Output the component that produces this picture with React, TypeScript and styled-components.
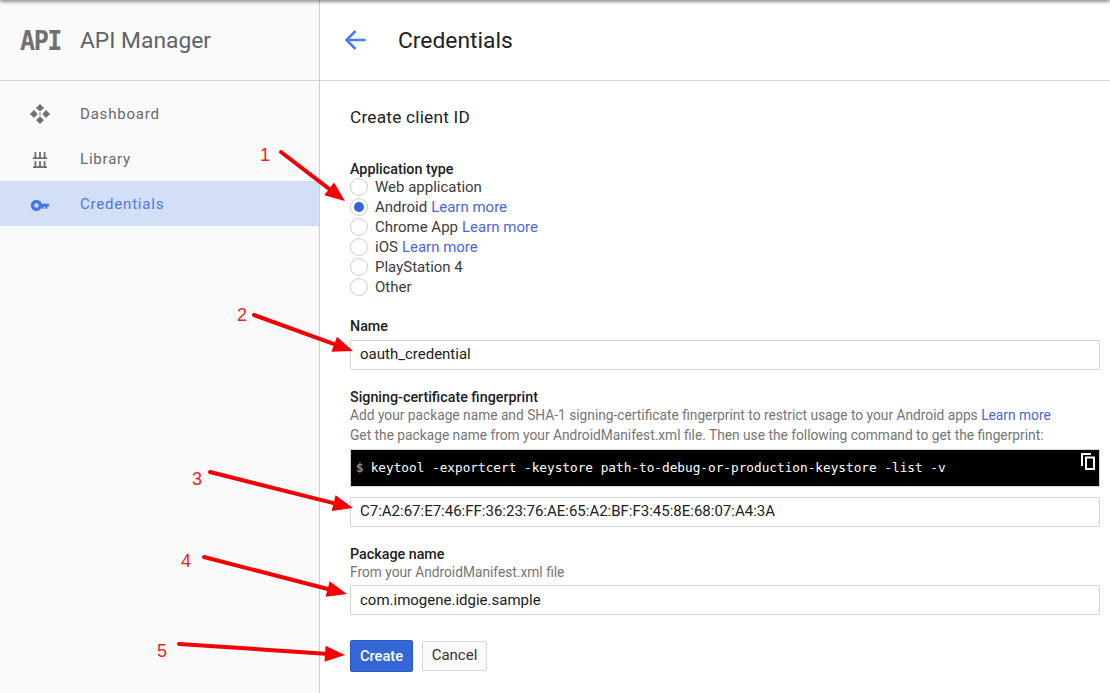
import React from 'react';
import styled, { createGlobalStyle } from 'styled-components';

const GlobalStyle = createGlobalStyle`
  html, body {
    margin: 0;
    padding: 0;
    background: #fff;
    overflow: hidden;
  }
  * { box-sizing: border-box; }
  body {
    font-family: Roboto, "Liberation Sans", Arial, sans-serif;
    color: #212121;
  }
`;

const Page = styled.div`
  position: relative;
  width: 1110px;
  height: 693px;
  display: flex;
  overflow: hidden;
`;

const TopShadow = styled.div`
  position: absolute;
  top: -4px;
  left: 0;
  right: 0;
  height: 4px;
  box-shadow: 0 1px 4px rgba(0, 0, 0, 0.65);
`;

const Sidebar = styled.aside`
  width: 320px;
  flex: none;
  background: #fafafa;
  border-right: 1px solid #cfcfcf;
`;

const Brand = styled.div`
  height: 81px;
  display: flex;
  align-items: center;
  padding-left: 20px;
  border-bottom: 1px solid #d4d4d4;
`;

const BrandMark = styled.span`
  width: 60px;
  font-family: "DejaVu Sans Mono", "Liberation Mono", monospace;
  font-weight: 700;
  font-size: 27px;
  letter-spacing: -1.6px;
  color: #707070;
  transform: scaleX(0.93);
  transform-origin: left center;
`;

const BrandName = styled.span`
  font-size: 22.8px;
  color: #5f6368;
`;

const Nav = styled.nav`
  padding-top: 10px;
`;

const NavItem = styled.div<{ $active?: boolean }>`
  height: 45px;
  display: flex;
  align-items: center;
  padding-left: 30px;
  gap: 30px;
  font-size: 15px;
  letter-spacing: 0.8px;
  color: ${({ $active }) => ($active ? '#4a78e6' : '#66696e')};
  background: ${({ $active }) => ($active ? '#d2dff6' : 'transparent')};
`;

const NavIcon = styled.svg`
  width: 20px;
  height: 20px;
  flex: none;
`;

const Main = styled.main`
  flex: 1;
  min-width: 0;
`;

const Header = styled.header`
  height: 81px;
  display: flex;
  align-items: center;
  padding-left: 23px;
  gap: 31px;
  border-bottom: 1px solid #d4d4d4;
`;

const BackIcon = styled.svg`
  width: 24px;
  height: 24px;
  flex: none;
`;

const Title = styled.h1`
  margin: 0;
  font-size: 22.8px;
  font-weight: 400;
  color: #212121;
`;

const Content = styled.div`
  padding: 0 10px 0 30px;
`;

const SubTitle = styled.h2`
  margin: 26px 0 0;
  height: 20px;
  line-height: 20px;
  font-size: 17.3px;
  font-weight: 400;
  letter-spacing: 0.2px;
  color: #212121;
`;

const Label = styled.div<{ $top: number }>`
  margin-top: ${({ $top }) => $top}px;
  height: 17px;
  line-height: 18px;
  font-size: 14.3px;
  font-weight: 500;
  color: #212121;
`;

const RadioList = styled.div`
  display: flex;
  flex-direction: column;
`;

const RadioRow = styled.div`
  height: 20px;
  display: flex;
  align-items: center;
  gap: 7px;
  font-size: 15px;
  color: #3c3c3c;
`;

const RadioMark = styled.span<{ $checked?: boolean }>`
  width: 18px;
  height: 18px;
  flex: none;
  border-radius: 50%;
  border: 1px solid #cfcfcf;
  background: #fff;
  display: flex;
  align-items: center;
  justify-content: center;
  &::after {
    content: '';
    width: 10px;
    height: 10px;
    border-radius: 50%;
    background: ${({ $checked }) => ($checked ? '#3367d6' : 'transparent')};
  }
`;

const LearnMore = styled.a<{ $flush?: boolean }>`
  color: #4c66d8;
  margin-left: ${({ $flush }) => ($flush ? 0 : 4)}px;
`;

const Help = styled.div<{ $short?: boolean }>`
  height: ${({ $short }) => ($short ? 19 : 20)}px;
  line-height: ${({ $short }) => ($short ? 21 : 20)}px;
  font-size: 13.75px;
  color: #757575;
  white-space: nowrap;
`;

const TextField = styled.div<{ $top: number; $line?: number }>`
  margin-top: ${({ $top }) => $top}px;
  height: 30px;
  line-height: ${({ $line }) => $line ?? 27}px;
  padding-left: 9px;
  border: 1px solid #d4d4d4;
  border-radius: 1px;
  background: #fff;
  font-size: 15px;
  color: #212121;
`;

const CodeBlock = styled.div`
  position: relative;
  margin-top: 4px;
  height: 38px;
  line-height: 36px;
  padding-left: 5px;
  border: 1px solid #d4d4d4;
  background: #000;
  color: #fff;
  font-family: "DejaVu Sans Mono", "Liberation Mono", monospace;
  font-size: 12.74px;
  white-space: pre;
`;

const Prompt = styled.span`
  color: #8a8a8a;
  font-weight: 700;
  margin-right: 7px;
`;

const CopyIcon = styled.svg`
  position: absolute;
  top: 2px;
  right: 2px;
  width: 18px;
  height: 19px;
`;

const Actions = styled.div`
  margin-top: 25px;
  display: flex;
  align-items: center;
  gap: 9px;
`;

const PrimaryButton = styled.button`
  width: 63px;
  height: 32px;
  padding: 0 0 1px;
  border: 1px solid #2a56c6;
  border-radius: 2px;
  background: #3367d6;
  color: #fff;
  font: 500 14.7px Roboto, "Liberation Sans", sans-serif;
`;

const SecondaryButton = styled.button`
  width: 65px;
  height: 30px;
  padding: 0 0 2px;
  border: 1px solid #d9d9d9;
  border-radius: 2px;
  background: #fafafa;
  color: #333;
  font: 400 15px Roboto, "Liberation Sans", sans-serif;
`;

const ArrowLayer = styled.svg`
  position: absolute;
  inset: 0;
  width: 1110px;
  height: 693px;
  pointer-events: none;
`;

const Callout = styled.span<{ $x: number; $y: number }>`
  position: absolute;
  left: ${({ $x }) => $x}px;
  top: ${({ $y }) => $y}px;
  font-family: "Liberation Sans", Arial, sans-serif;
  font-size: 18px;
  line-height: 20px;
  color: #f01e1e;
`;

const RADIOS = [
  { name: 'Web application' },
  { name: 'Android', learn: true, checked: true },
  { name: 'Chrome App', learn: true },
  { name: 'iOS', learn: true },
  { name: 'PlayStation 4' },
  { name: 'Other' },
];

// start and tip of each red arrow, with its number
const ARROWS = [
  { x1: 281, y1: 152, x2: 345, y2: 201, n: 1, nx: 260, ny: 145 },
  { x1: 254, y1: 315, x2: 353, y2: 351, n: 2, nx: 237, ny: 305 },
  { x1: 210, y1: 472, x2: 353, y2: 508, n: 3, nx: 192, ny: 469 },
  { x1: 204, y1: 557, x2: 347, y2: 594, n: 4, nx: 181, ny: 551 },
  { x1: 179, y1: 644, x2: 345, y2: 655, n: 5, nx: 157, ny: 641 },
];

const Arrow: React.FC<{ x1: number; y1: number; x2: number; y2: number }> = ({ x1, y1, x2, y2 }) => {
  const a = Math.atan2(y2 - y1, x2 - x1);
  const bx = x2 - Math.cos(a) * 20;
  const by = y2 - Math.sin(a) * 20;
  const px = -Math.sin(a) * 8;
  const py = Math.cos(a) * 8;
  return (
    <g>
      <line x1={x1} y1={y1} x2={bx} y2={by} stroke="#f50000" strokeWidth={4} strokeLinecap="round" />
      <polygon points={`${x2},${y2} ${bx + px},${by + py} ${bx - px},${by - py}`} fill="#f50000" />
    </g>
  );
};

export default function App() {
  return (
    <Page>
      <GlobalStyle />
      <Sidebar>
        <Brand>
          <BrandMark>API</BrandMark>
          <BrandName>API Manager</BrandName>
        </Brand>
        <Nav>
          <NavItem>
            <NavIcon viewBox="0 0 20 20">
              <path
                fill="#6f6f6f"
                d="M10 0l4 4-4 3.600L6 4zM10 20l-4-4 4-3.600 4 3.600zM0 10l4-4 3.600 4L4 14zM20 10l-4 4-3.600-4L16 6z"
              />
              <path fill="#6f6f6f" d="M9.100 8.400h1.800v1H9.100zM9.100 10.600h1.800v1H9.100z" />
            </NavIcon>
            Dashboard
          </NavItem>
          <NavItem>
            <NavIcon viewBox="0 0 20 20">
              <path
                fill="#6f6f6f"
                d="M4.500 3h1.800v5.200H4.500zM9.100 3h1.800v5.200H9.100zM13.700 3h1.800v5.200h-1.800zM3 8.200h14V10H3zM4.500 12h1.800v5.200H4.500zM9.100 12h1.800v5.200H9.100zM13.700 12h1.800v5.200h-1.800zM3 17.200h14V19H3z"
              />
            </NavIcon>
            Library
          </NavItem>
          <NavItem $active>
            <NavIcon viewBox="0 0 20 20">
              <path
                fill="#3f73e8"
                fillRule="evenodd"
                d="M6.500 6a5.500 5.500 0 0 1 5.200 3.700H19v2.700h-1.700v2.300h-2.100v-2.300h-1.400v2.300h-2.100v-2.300a5.500 5.500 0 1 1-5.200-6.400zm0 3.200a2.300 2.300 0 1 0 0 4.600 2.300 2.300 0 0 0 0-4.600z"
              />
            </NavIcon>
            Credentials
          </NavItem>
        </Nav>
      </Sidebar>
      <Main>
        <Header>
          <BackIcon viewBox="0 0 24 24">
            <path
              fill="none"
              stroke="#4a80ee"
              strokeWidth={2.6}
              d="M22.500 12H4M12.500 3L3.500 12l9 9"
            />
          </BackIcon>
          <Title>Credentials</Title>
        </Header>
        <Content>
          <SubTitle>Create client ID</SubTitle>
          <Label $top={33}>Application type</Label>
          <RadioList>
            {RADIOS.map((r) => (
              <RadioRow key={r.name}>
                <RadioMark $checked={r.checked} />
                <span>
                  {r.name}
                  {r.learn && <LearnMore>Learn more</LearnMore>}
                </span>
              </RadioRow>
            ))}
          </RadioList>
          <Label $top={20}>Name</Label>
          <TextField $top={6}>oauth_credential</TextField>
          <Label $top={18}>Signing-certificate fingerprint</Label>
          <Help>
            Add your package name and SHA-1 signing-certificate fingerprint to restrict usage to your Android apps{' '}
            <LearnMore $flush>Learn more</LearnMore>
          </Help>
          <Help>Get the package name from your AndroidManifest.xml file. Then use the following command to get the fingerprint:</Help>
          <CodeBlock>
            <Prompt>$</Prompt>keytool -exportcert -keystore path-to-debug-or-production-keystore -list -v
            <CopyIcon viewBox="0 0 18 19">
              <path
                fill="#fff"
                fillRule="evenodd"
                d="M2 1h10v2H4v11H2zM6 4.500h10V18H6zM8 6.500v9.500h6V6.500z"
              />
            </CopyIcon>
          </CodeBlock>
          <TextField $top={10}>C7:A2:67:E7:46:FF:36:23:76:AE:65:A2:BF:F3:45:8E:68:07:A4:3A</TextField>
          <Label $top={18}>Package name</Label>
          <Help $short>From your AndroidManifest.xml file</Help>
          <TextField $top={4} $line={29}>com.imogene.idgie.sample</TextField>
          <Actions>
            <PrimaryButton>Create</PrimaryButton>
            <SecondaryButton>Cancel</SecondaryButton>
          </Actions>
        </Content>
      </Main>
      <TopShadow />
      <ArrowLayer viewBox="0 0 1110 693">
        {ARROWS.map((a) => (
          <Arrow key={a.n} x1={a.x1} y1={a.y1} x2={a.x2} y2={a.y2} />
        ))}
      </ArrowLayer>
      {ARROWS.map((a) => (
        <Callout key={a.n} $x={a.nx} $y={a.ny}>
          {a.n}
        </Callout>
      ))}
    </Page>
  );
}
